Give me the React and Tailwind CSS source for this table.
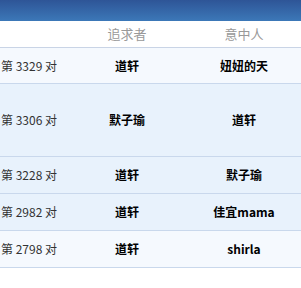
export default function App() {
  const rows = [
    { n: "3329", a: "道轩", b: "妞妞的天", h: "h-[36px]", bg: "bg-[#f5f9fe]" },
    { n: "3306", a: "默子瑜", b: "道轩", h: "h-[73px]", bg: "bg-[#e8f2fc]" },
    { n: "3228", a: "道轩", b: "默子瑜", h: "h-[37px]", bg: "bg-[#e8f2fc]" },
    { n: "2982", a: "道轩", b: "佳宜mama", h: "h-[37px]", bg: "bg-[#e8f2fc]" },
    { n: "2798", a: "道轩", b: "shirla", h: "h-[37px]", bg: "bg-[#f5f9fe]" },
  ];
  return (
    <div className="w-[301px] h-[288px] bg-white overflow-hidden" style={{ fontFamily: '"Noto Sans CJK SC", "Noto Sans", sans-serif' }}>
      <div className="h-[21px] bg-gradient-to-b from-[#2e5597] to-[#3c78b8]" />
      <div className="grid grid-cols-[67px_120px_1fr] h-[27px] items-center border-b border-[#c9d4e6] text-[13px] text-[#999999]">
        <div />
        <div className="text-center">追求者</div>
        <div className="text-center">意中人</div>
      </div>
      {rows.map((r, i) => (
        <div key={i} className={`grid grid-cols-[67px_120px_1fr] items-center border-b border-[#c9d8ec] ${r.h} ${r.bg}`}>
          <div className="pl-[1px] text-[12px] text-[#333333] whitespace-nowrap">第 {r.n} 对</div>
          <div className="text-center text-[12px] font-bold text-black">{r.a}</div>
          <div className="text-center text-[12px] font-bold text-black">{r.b}</div>
        </div>
      ))}
    </div>
  );
}
